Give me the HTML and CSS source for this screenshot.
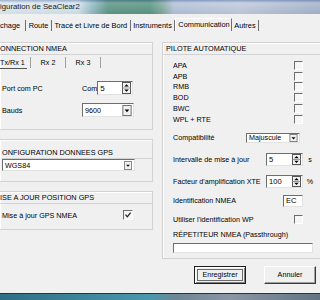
FILE: index.html
```html
<!doctype html>
<html>
    <head>
        <meta http-equiv="Content-Type" content="text/html; charset=utf-8">
        <link rel="stylesheet" href="styles.css">
    </head>
    <body>
        <div class="window">
            <div class="titlebar">iguration de SeaClear2</div>
            <ul class="tabs">
                <li class="first">chage</li>
                <li>Route</li>
                <li>Tracé et Livre de Bord</li>
                <li>Instruments</li>
                <li class="active">Communication</li>
                <li>Autres</li>
            </ul>
            <div class="panel">
                <div class="left">
                    <div class="group cut nmea">
                        <div class="group-title">ONNECTION NMEA</div>
                        <ul class="subtabs">
                            <li class="active"><span>Tx/Rx 1</span></li>
                            <li>Rx 2</li>
                            <li>Rx 3</li>
                        </ul>
                        <div class="form">
                            <span>Port com PC</span>
                            <span class="field">
                                <span>Com</span>
                                <span class="box spin port"><span class="val">5</span>
                                    <svg class="updown" viewBox="0 0 9 12"><rect x="0.5" y="0.5" width="8" height="11" fill="#f4f4f4" stroke="#555"/><line x1="0.5" y1="6" x2="8.5" y2="6" stroke="#999"/><path d="M2.2 4.6 L4.5 2.2 L6.8 4.6Z M2.2 7.4 L4.5 9.8 L6.8 7.4Z" fill="#000"/></svg>
                                </span>
                            </span>
                            <span>Bauds</span>
                            <span class="box select bauds"><span class="val">9600</span>
                                <svg class="drop" viewBox="0 0 10 12"><rect x="0.5" y="0.5" width="9" height="11" fill="#f0f0f0" stroke="#666"/><path d="M2.5 5 L7.5 5 L5 7.8Z" fill="#000"/></svg>
                            </span>
                        </div>
                    </div>
                    <div class="group cut gps">
                        <div class="group-title">ONFIGURATION DONNEES GPS</div>
                        <span class="box select datum"><span class="val">WGS84</span>
                            <svg class="drop" viewBox="0 0 10 12"><rect x="0.5" y="0.5" width="9" height="11" fill="#f0f0f0" stroke="#666"/><path d="M2.5 5 L7.5 5 L5 7.8Z" fill="#000"/></svg>
                        </span>
                    </div>
                    <div class="group cut update">
                        <div class="group-title">ISE A JOUR POSITION GPS</div>
                        <div class="line">
                            <span>Mise à jour GPS NMEA</span>
                            <span class="check checked"><svg viewBox="0 0 8 8"><path d="M1.5 3.6 L3.3 5.8 L6.6 1.6" stroke="#222" stroke-width="1.3" fill="none"/></svg></span>
                        </div>
                    </div>
                </div>
                <div class="group pilot">
                    <div class="group-title">PILOTE AUTOMATIQUE</div>
                    <div class="content">
                        <div class="checks">
                            <div class="row"><span class="label">APA</span><span class="check"></span></div>
                            <div class="row"><span class="label">APB</span><span class="check"></span></div>
                            <div class="row"><span class="label">RMB</span><span class="check"></span></div>
                            <div class="row"><span class="label">BOD</span><span class="check"></span></div>
                            <div class="row"><span class="label">BWC</span><span class="check"></span></div>
                            <div class="row"><span class="label">WPL + RTE</span><span class="check"></span></div>
                        </div>
                        <div class="row compat">
                            <span class="label">Compatibilité</span>
                            <span class="box select case"><span class="val">Majuscule</span>
                                <svg class="drop" viewBox="0 0 10 10"><rect x="0.5" y="0.5" width="9" height="9" fill="#f0f0f0" stroke="#666"/><path d="M2.5 4 L7.5 4 L5 6.8Z" fill="#000"/></svg>
                            </span>
                            <span class="unit"></span>
                        </div>
                        <div class="row interval">
                            <span class="label">Intervalle de mise à jour</span>
                            <span class="box spin num"><span class="val">5</span>
                                <svg class="updown" viewBox="0 0 9 11"><rect x="0.5" y="0.5" width="8" height="10" fill="#f4f4f4" stroke="#555"/><line x1="0.5" y1="5.5" x2="8.5" y2="5.5" stroke="#999"/><path d="M2.2 4.2 L4.5 2 L6.8 4.2Z M2.2 6.8 L4.5 9 L6.8 6.8Z" fill="#000"/></svg>
                            </span>
                            <span class="unit">s</span>
                        </div>
                        <div class="row xte">
                            <span class="label">Facteur d'amplification XTE</span>
                            <span class="box spin num"><span class="val">100</span>
                                <svg class="updown" viewBox="0 0 9 11"><rect x="0.5" y="0.5" width="8" height="10" fill="#f4f4f4" stroke="#555"/><line x1="0.5" y1="5.5" x2="8.5" y2="5.5" stroke="#999"/><path d="M2.2 4.2 L4.5 2 L6.8 4.2Z M2.2 6.8 L4.5 9 L6.8 6.8Z" fill="#000"/></svg>
                            </span>
                            <span class="unit">%</span>
                        </div>
                        <div class="row ident">
                            <span class="label">Identification NMEA</span>
                            <span class="box code"><span class="val">EC</span></span>
                            <span class="unit"></span>
                        </div>
                        <div class="row wp">
                            <span class="label">Utiliser l'identification WP</span>
                            <span class="check"></span>
                            <span class="unit"></span>
                        </div>
                        <div class="row repeat">
                            <span class="label">RÉPETITEUR NMEA (Passthrough)</span>
                        </div>
                        <div class="box passthrough"></div>
                    </div>
                </div>
            </div>
            <div class="buttons">
                <button class="btn default"><span>Enregistrer</span></button>
                <button class="btn">Annuler</button>
            </div>
            <div class="taskbar"></div>
        </div>
    </body>
</html>
```

FILE: styles.css
```css
body{
    margin: 0;
    font-family: "Liberation Sans", Arial, sans-serif;
    font-size: 7.2px;
    color: #000;
}
.window{
    width: 320px;
    height: 300px;
    overflow: hidden;
    display: flex;
    flex-direction: column;
    background: #f0f0f0;
}
.titlebar{
    height: 14px;
    line-height: 14px;
    font-size: 7.8px;
    color: #1a1a1a;
    white-space: nowrap;
    background:
        linear-gradient(to bottom, rgba(40, 70, 140, .35) 0, rgba(255, 255, 255, .15) 3px, rgba(0, 0, 0, .04) 14px),
        linear-gradient(to right, #dce8f0 0, #d4e3ec 78px, #93bcc6 92px, #5f9786 108px, #5a9682 150px, #7fa89c 162px, #b3c2d8 174px, #bfcadc 240px, #a5b3cb 320px);
}
.tabs{
    display: flex;
    align-items: flex-end;
    height: 17px;
    margin: 0;
    padding: 0;
    list-style: none;
    font-size: 7.4px;
    white-space: nowrap;
}
.tabs li{
    height: 11px;
    line-height: 11px;
    padding: 0 2.5px;
    border-right: 1px solid #6e6e6e;
}
.tabs .first{
    padding-left: 0;
    padding-right: 5px;
}
.tabs .active{
    height: 13px;
    padding: 0 1px 2px 2px;
    box-sizing: border-box;
    line-height: 11px;
    border-left: 1px solid #fff;
    border-top: 1px solid #fff;
}
.panel{
    display: grid;
    grid-template-columns: 153px 160px;
    column-gap: 9px;
    align-items: start;
    padding-top: 11px;
}
.left{
    display: flex;
    flex-direction: column;
    gap: 9px;
}
.group{
    border: 1px solid #d2d2d2;
    box-shadow: inset 1px 1px 0 #fff;
}
.group.cut{
    border-left: none;
}
.group-title{
    height: 11px;
    line-height: 11px;
    padding-left: 3px;
    font-size: 7.3px;
    white-space: nowrap;
    border-bottom: 1px solid #d2d2d2;
}
.cut .group-title{
    padding-left: 0;
}
.subtabs{
    display: flex;
    height: 14px;
    margin: 0;
    padding: 0;
    list-style: none;
}
.subtabs li{
    width: 34px;
    margin-top: 2px;
    height: 11px;
    line-height: 11px;
    text-align: center;
    border-right: 1px solid #a0a0a0;
}
.subtabs .active{
    width: 30px;
    text-align: left;
}
.subtabs .active span{
    display: inline-block;
    width: 27px;
    border-bottom: 1px solid #555;
    line-height: 11px;
}
.form{
    display: grid;
    grid-template-columns: 80px auto;
    grid-auto-rows: 14px;
    row-gap: 8px;
    align-items: center;
    padding: 12px 0 12px 2px;
}
.field{
    display: flex;
    align-items: center;
}
.box{
    display: flex;
    align-items: center;
    box-sizing: border-box;
    background: #fff;
    border: 1px solid;
    border-color: #6d6d6d #e2e2e2 #e2e2e2 #6d6d6d;
}
.box .val{
    flex: 1;
    padding-left: 2px;
    white-space: nowrap;
}
.spin, .select{
    justify-content: space-between;
}
.updown{
    width: 9px;
    height: 12px;
    margin-right: 1px;
}
.drop{
    width: 10px;
    height: 11px;
    margin-right: 1px;
}
.port{
    width: 36px;
    height: 14px;
    font-size: 8px;
}
.bauds{
    width: 52px;
    height: 14px;
}
.gps{
    padding: 7px 0 10px 2px;
}
.datum{
    width: 133px;
    height: 12px;
}
.datum .drop{
    height: 9px;
}
.update .line{
    display: flex;
    align-items: center;
    height: 10px;
    margin: 6px 0 9px;
    padding-left: 2px;
}
.update .line span:first-child{
    width: 121px;
}
.check{
    display: block;
    width: 7px;
    height: 7px;
    background: #f6f6f6;
    border-top: 1px solid #6d6d6d;
    border-left: 1px solid #6d6d6d;
    border-right: 1px solid #fff;
    border-bottom: 1px solid #fff;
}
.check.checked{
    width: 8px;
    height: 8px;
}
.check svg{
    display: block;
    width: 8px;
    height: 8px;
}
.pilot{
    border-right: none;
}
.content{
    padding: 5px 5px 5px 10px;
}
.row{
    display: flex;
    align-items: center;
    white-space: nowrap;
}
.row .label{
    flex: 1;
}
.unit{
    width: 14px;
    text-align: center;
}
.checks .row{
    height: 10.8px;
    padding-right: 14px;
}
.compat{
    height: 10px;
    margin-top: 8px;
}
.case{
    width: 54px;
    height: 10px;
    margin-right: 3px;
}
.case .drop{
    width: 9px;
    height: 8px;
}
.interval{
    height: 13px;
    margin-top: 10.5px;
}
.xte{
    height: 13px;
    margin-top: 9px;
}
.num{
    width: 37px;
    height: 13px;
    font-size: 7.6px;
}
.num .updown{
    height: 11px;
}
.ident{
    height: 12px;
    margin-top: 6.5px;
}
.code{
    width: 20px;
    height: 12px;
    font-size: 7.6px;
}
.wp{
    height: 10px;
    margin-top: 8px;
}
.repeat{
    height: 10px;
    margin-top: 5px;
}
.passthrough{
    width: 140px;
    height: 10px;
    margin-top: 3px;
}
.buttons{
    display: flex;
    justify-content: flex-end;
    gap: 18px;
    padding-right: 4px;
    margin-top: 7px;
}
.btn{
    width: 52px;
    height: 18px;
    padding: 0;
    font-family: "Liberation Sans", Arial, sans-serif;
    font-size: 7.2px;
    color: #000;
    background: #f0f0f0;
    border: 1px solid;
    border-color: #fff #3a3a3a #3a3a3a #fff;
    box-shadow: inset -1px -1px 0 #a0a0a0;
}
.btn.default{
    border: 1px solid #1e1e1e;
    box-shadow: inset 1px 1px 0 #fff, inset -1px -1px 0 #808080;
}
.btn.default span{
    display: block;
    margin: 2px;
    line-height: 10px;
    border: 1px solid #6a6a6a;
}
.taskbar{
    margin-top: auto;
    height: 6px;
    border-top: 1px solid #1b3a48;
    background: linear-gradient(to right, #2f6e84 0, #4a98ac 150px, #6d8796 175px, #8a96a6 230px, #5f7484 320px);
}
```
